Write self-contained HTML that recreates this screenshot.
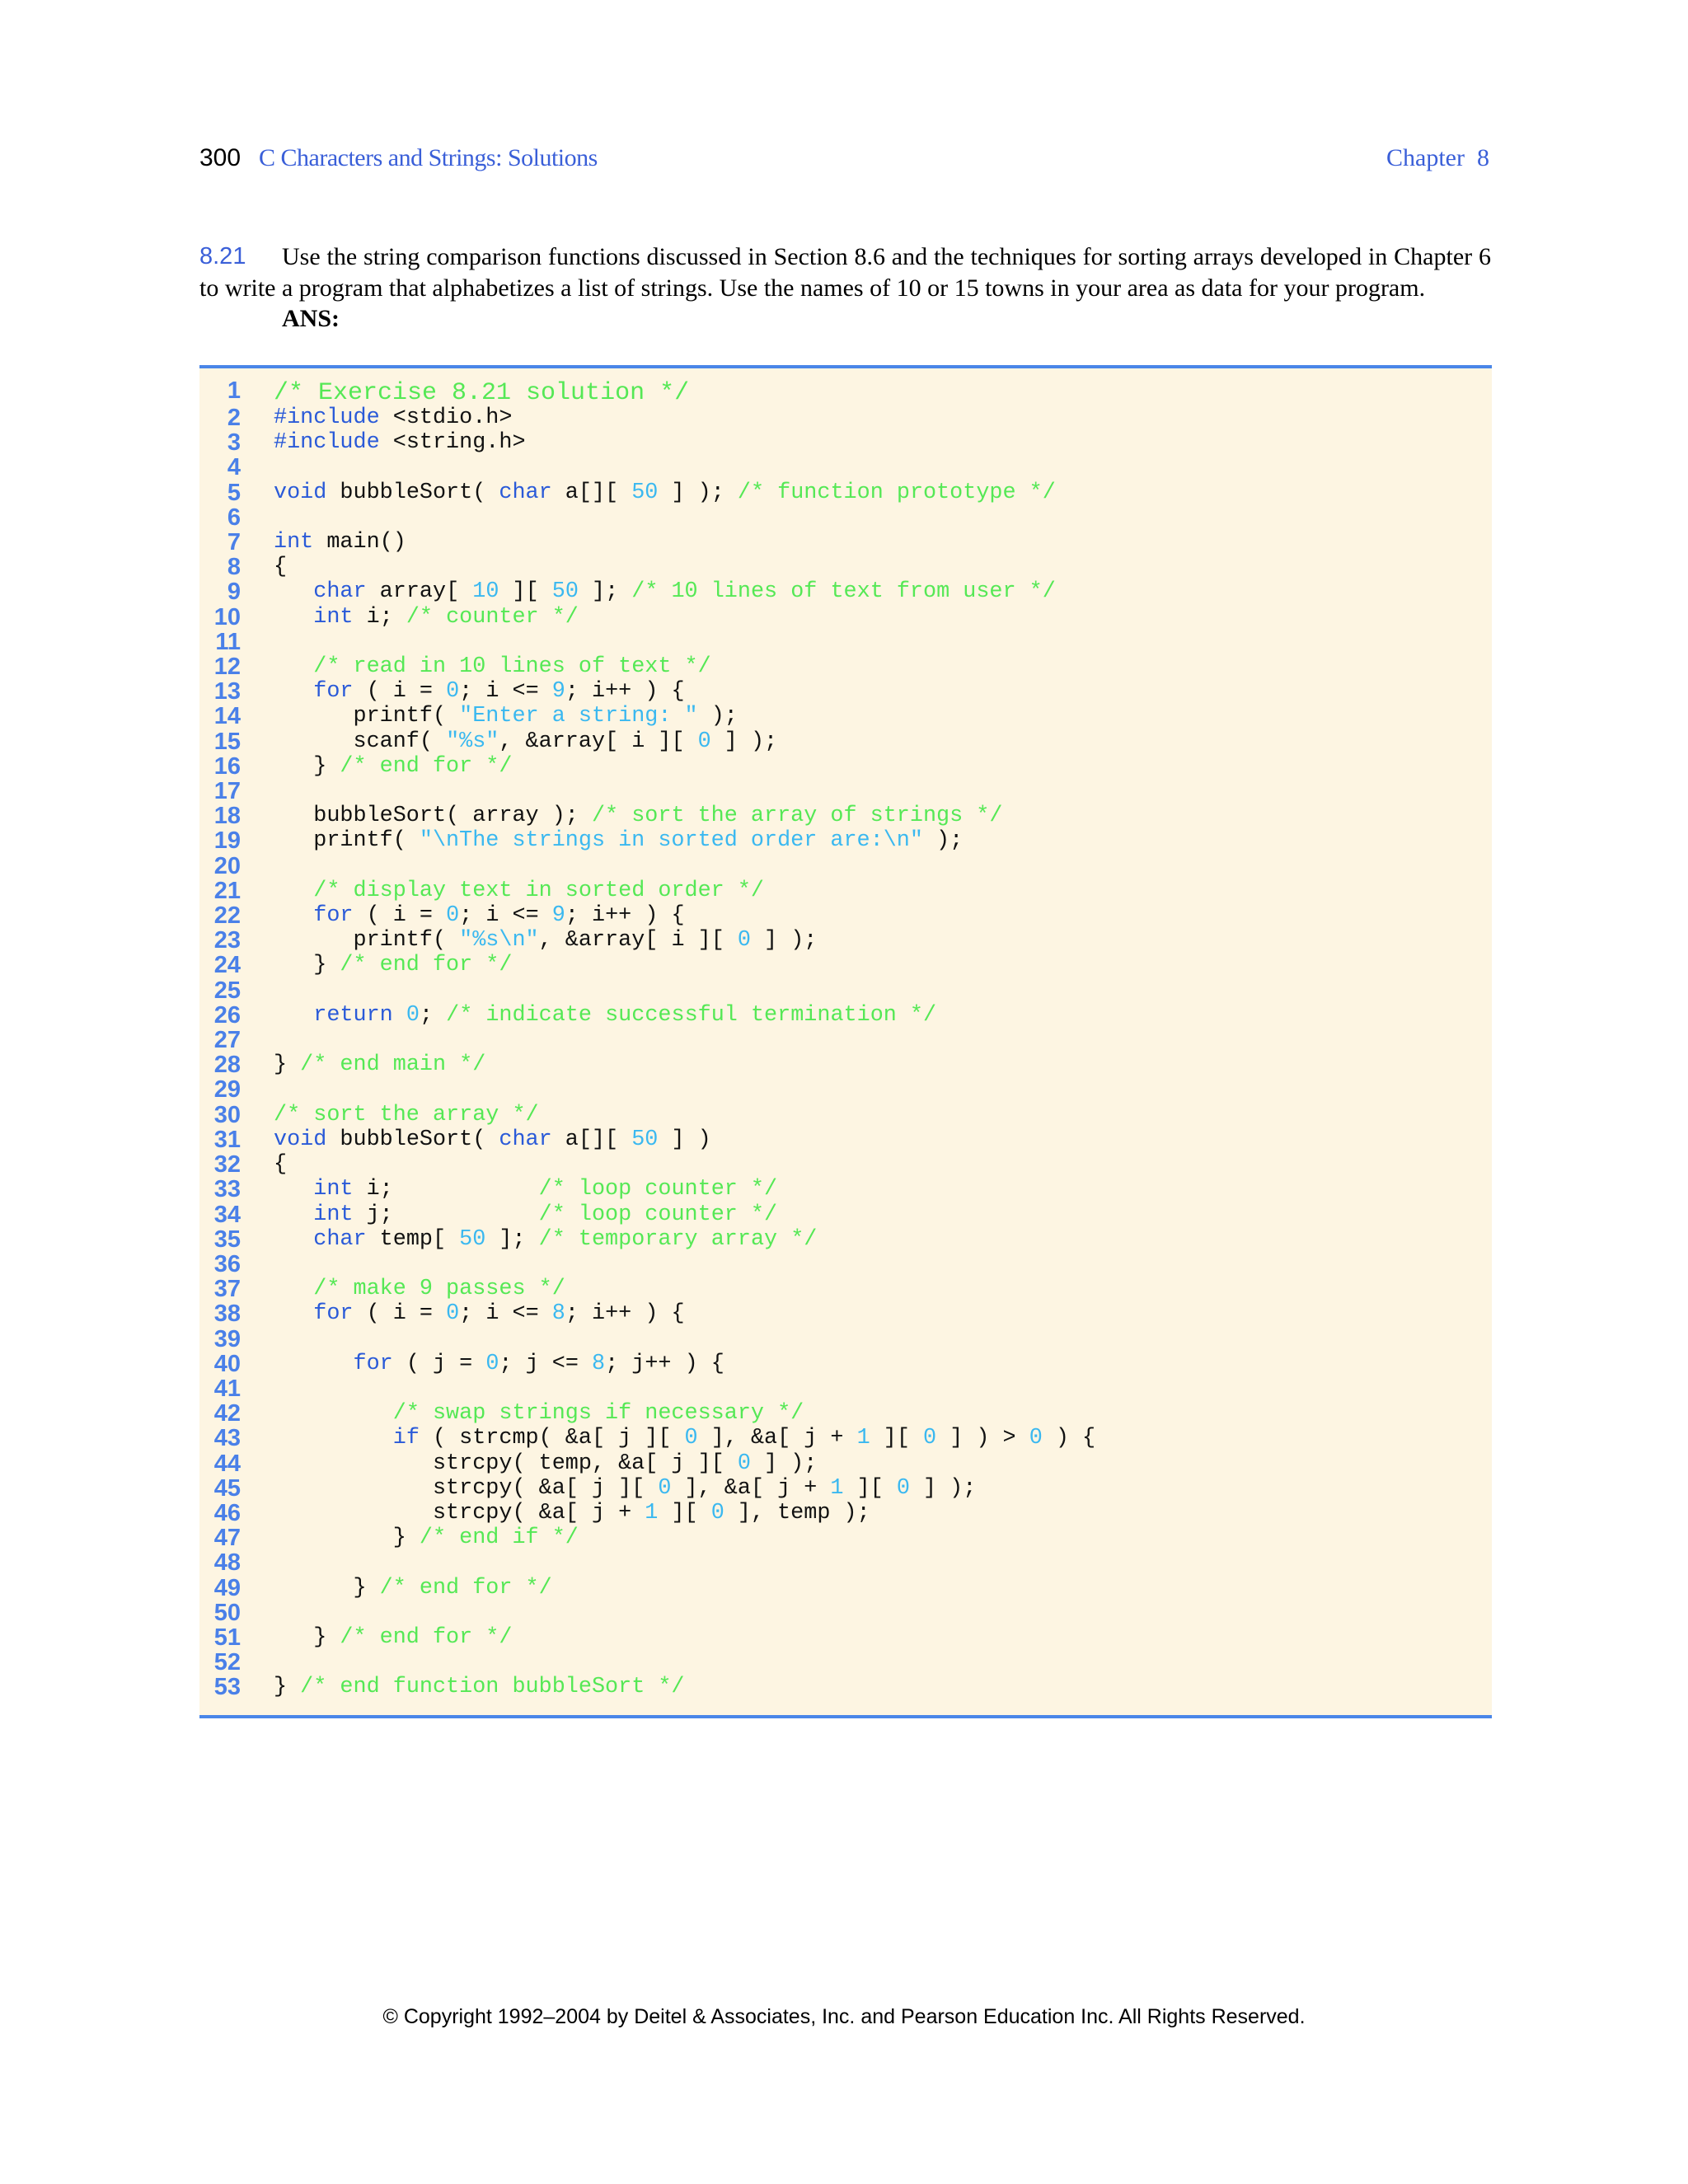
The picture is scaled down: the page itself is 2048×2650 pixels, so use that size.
<!DOCTYPE html>
<html><head><meta charset="utf-8"><style>
body{margin:0;background:#fff;width:2048px;height:2650px;position:relative;overflow:hidden;font-family:"Liberation Serif",serif;}
.abs{position:absolute;white-space:nowrap;}
.blue{color:#3a5fd8;}
.box{position:absolute;left:242px;top:443px;width:1568px;height:1642px;background:#fdf5e2;border-top:4px solid #4a86e8;border-bottom:4px solid #4a86e8;box-sizing:border-box;}
.ln{position:absolute;left:232px;width:60px;text-align:right;font-family:"Liberation Sans",sans-serif;font-weight:bold;color:#4a80e8;font-size:29px;}
.cd{position:absolute;left:332px;font-family:"Liberation Mono",monospace;font-size:26.8px;white-space:pre;color:#111;}
.k{color:#2a5ad8}.c{color:#55e855}.n{color:#3ab8f0}
</style></head><body>
<div class="abs" style="left:242px;top:175px;font-family:'Liberation Sans',sans-serif;font-size:30px;">300</div>
<div class="abs blue" style="left:314px;top:175px;font-size:30px;letter-spacing:-0.5px;">C Characters and Strings: Solutions</div>
<div class="abs blue" style="left:1682px;top:175px;font-size:30px;">Chapter&nbsp;&nbsp;8</div>

<div class="abs blue" style="left:242px;top:295px;font-family:'Liberation Sans',sans-serif;font-size:29px;">8.21</div>
<div class="abs" style="left:342px;top:295px;width:1467px;font-size:30px;text-align:justify;text-align-last:justify;">Use the string comparison functions discussed in Section 8.6 and the techniques for sorting arrays developed in Chapter 6</div>
<div class="abs" style="left:242px;top:333px;font-size:30px;">to write a program that alphabetizes a list of strings. Use the names of 10 or 15 towns in your area as data for your program.</div>
<div class="abs" style="left:342px;top:370px;font-size:30px;font-weight:bold;">ANS:</div>

<div class="box"></div>

<div class="abs" style="left:0;width:2048px;text-align:center;top:2433px;font-family:'Liberation Sans',sans-serif;font-size:25px;">© Copyright 1992–2004 by Deitel &amp; Associates, Inc. and Pearson Education Inc. All Rights Reserved.</div>

<div class="ln" style="top:458px;line-height:33px;">1</div>
<div class="cd c" style="top:461px;line-height:33px;font-size:30px;">/* Exercise 8.21 solution */</div>
<div style="position:absolute;top:492px;left:0;">
<div class="ln" style="top:0;line-height:30.2px;">2<br>3<br>4<br>5<br>6<br>7<br>8<br>9<br>10<br>11<br>12<br>13<br>14<br>15<br>16<br>17<br>18<br>19<br>20<br>21<br>22<br>23<br>24<br>25<br>26<br>27<br>28<br>29<br>30<br>31<br>32<br>33<br>34<br>35<br>36<br>37<br>38<br>39<br>40<br>41<br>42<br>43<br>44<br>45<br>46<br>47<br>48<br>49<br>50<br>51<br>52<br>53</div>
<div class="cd" style="top:0;line-height:30.2px;"><span class="k">#include</span> &lt;stdio.h&gt;
<span class="k">#include</span> &lt;string.h&gt;

<span class="k">void</span> bubbleSort( <span class="k">char</span> a[][ <span class="n">50</span> ] ); <span class="c">/* function prototype */</span>

<span class="k">int</span> main()
{
   <span class="k">char</span> array[ <span class="n">10</span> ][ <span class="n">50</span> ]; <span class="c">/* 10 lines of text from user */</span>
   <span class="k">int</span> i; <span class="c">/* counter */</span>

   <span class="c">/* read in 10 lines of text */</span>
   <span class="k">for</span> ( i = <span class="n">0</span>; i &lt;= <span class="n">9</span>; i++ ) {
      printf( <span class="n">"Enter a string: "</span> );
      scanf( <span class="n">"%s"</span>, &amp;array[ i ][ <span class="n">0</span> ] );
   } <span class="c">/* end for */</span>

   bubbleSort( array ); <span class="c">/* sort the array of strings */</span>
   printf( <span class="n">"\nThe strings in sorted order are:\n"</span> );

   <span class="c">/* display text in sorted order */</span>
   <span class="k">for</span> ( i = <span class="n">0</span>; i &lt;= <span class="n">9</span>; i++ ) {
      printf( <span class="n">"%s\n"</span>, &amp;array[ i ][ <span class="n">0</span> ] );
   } <span class="c">/* end for */</span>

   <span class="k">return</span> <span class="n">0</span>; <span class="c">/* indicate successful termination */</span>

} <span class="c">/* end main */</span>

<span class="c">/* sort the array */</span>
<span class="k">void</span> bubbleSort( <span class="k">char</span> a[][ <span class="n">50</span> ] )
{
   <span class="k">int</span> i;           <span class="c">/* loop counter */</span>
   <span class="k">int</span> j;           <span class="c">/* loop counter */</span>
   <span class="k">char</span> temp[ <span class="n">50</span> ]; <span class="c">/* temporary array */</span>

   <span class="c">/* make 9 passes */</span>
   <span class="k">for</span> ( i = <span class="n">0</span>; i &lt;= <span class="n">8</span>; i++ ) {

      <span class="k">for</span> ( j = <span class="n">0</span>; j &lt;= <span class="n">8</span>; j++ ) {

         <span class="c">/* swap strings if necessary */</span>
         <span class="k">if</span> ( strcmp( &amp;a[ j ][ <span class="n">0</span> ], &amp;a[ j + <span class="n">1</span> ][ <span class="n">0</span> ] ) &gt; <span class="n">0</span> ) {
            strcpy( temp, &amp;a[ j ][ <span class="n">0</span> ] );
            strcpy( &amp;a[ j ][ <span class="n">0</span> ], &amp;a[ j + <span class="n">1</span> ][ <span class="n">0</span> ] );
            strcpy( &amp;a[ j + <span class="n">1</span> ][ <span class="n">0</span> ], temp );
         } <span class="c">/* end if */</span>

      } <span class="c">/* end for */</span>

   } <span class="c">/* end for */</span>

} <span class="c">/* end function bubbleSort */</span></div>
</div>
</body></html>
